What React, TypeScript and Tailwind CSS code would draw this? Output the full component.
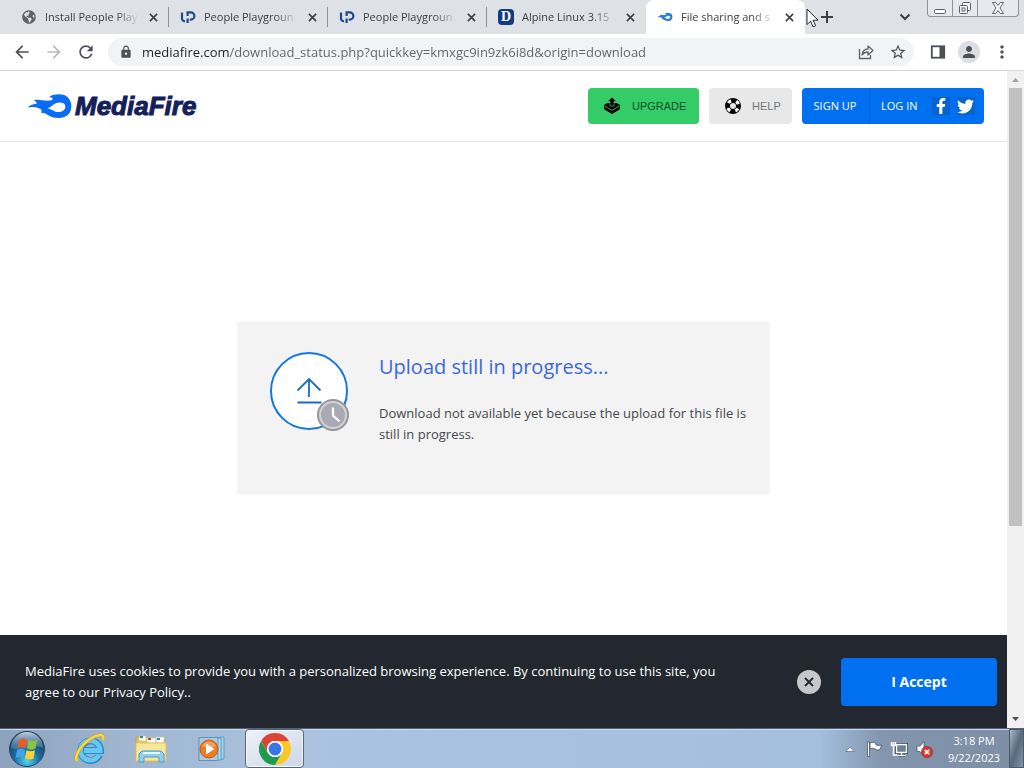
import type { ReactNode } from "react";
import { MdArrowBack, MdArrowForward, MdLock, MdMoreVert, MdPerson, MdRefresh, MdStarBorder } from "react-icons/md";
import { FaFacebookF, FaGlobeAmericas, FaTwitter } from "react-icons/fa";

function Cross({ className }: { className: string }) {
  return (
    <svg viewBox="0 0 10 10" className={className} fill="none" stroke="currentColor" strokeWidth="1.8">
      <path d="M1 1l8 8M9 1l-8 8" />
    </svg>
  );
}

function HookMark() {
  return (
    <svg viewBox="0 0 16 16" className="size-4" fill="none" stroke="#1d4a8f" strokeWidth="2.2">
      <path d="M2 3.500v6a2.600 2.600 0 0 0 3 2.600" />
      <path d="M7.600 14V9.500M7.600 7V3.400h3.200a3.600 3.600 0 0 1 0 7.200H9.800" />
    </svg>
  );
}

function TileMark() {
  return (
    <span className="flex size-4 items-center justify-center rounded bg-[#123a85] font-['Liberation_Serif',serif] text-sm leading-4 font-bold text-white">
      D
    </span>
  );
}

function Flame({ className }: { className: string }) {
  return (
    <svg viewBox="78 66 140 80" className={className} aria-hidden="true">
      <path
        fill="currentColor"
        fillRule="evenodd"
        d="M146 76C161 67 187 66 200 76C216 88 217 115 205 129C191 145 162 143 145 134C135 127 131 124 119 125C126 119 122 114 114 111C104 107 92 106 80 109C88 101 98 99 108 98C107 93 104 89 98 87C114 82 136 92 152 87C160 84 156 79 146 76ZM140 111C153 109 160 94 178 94C192 94 197 103 194 111C189 123 173 125 163 121C155 117 150 113 140 111Z"
      />
    </svg>
  );
}

type TabInfo = { title: string; icon: ReactNode; active?: boolean; line?: boolean };

const tabs: TabInfo[] = [
  { title: "Install People Play", icon: <FaGlobeAmericas className="size-3.5 text-[#5f6368]" />, line: true },
  { title: "People Playgroun", icon: <HookMark />, line: true },
  { title: "People Playgroun", icon: <HookMark />, line: true },
  { title: "Alpine Linux 3.15", icon: <TileMark /> },
  { title: "File sharing and s", icon: <Flame className="h-4 w-4 text-[#2f7fd0]" />, active: true },
];

function Tab({ title, icon, active, line }: TabInfo) {
  return (
    <div
      className={
        active
          ? "flex h-full max-w-[159px] min-w-0 flex-1 items-center rounded-t-lg bg-white pr-2 pl-[11px]"
          : "flex h-full max-w-[159px] min-w-0 flex-1 items-center pl-[11px]"
      }
    >
      <button className="flex min-w-0 flex-1 items-center gap-2 text-left text-[11px] text-[#3c4043]">
        <span className="flex size-4 shrink-0 items-center justify-center">{icon}</span>
        <span className="flex-1 overflow-hidden whitespace-nowrap [mask-image:linear-gradient(to_right,black_75%,transparent)]">
          {title}
        </span>
      </button>
      <button aria-label={`Close ${title}`} className="ml-1.5 flex size-4 items-center justify-center text-[#3c4043]">
        <Cross className="size-[9px]" />
      </button>
      {!active && <span className={line ? "ml-[7px] h-5 w-px bg-[#8d9196]" : "ml-[7px] h-5 w-px"} />}
    </div>
  );
}

function TabStrip() {
  return (
    <div className="flex h-[34px] shrink-0 items-center bg-[#dee1e6] pl-2.5">
      <div className="flex h-full min-w-0 flex-1 items-center">
        {tabs.map((tab, i) => (
          <Tab key={i} {...tab} />
        ))}
        <button aria-label="New tab" className="ml-3 flex size-5 items-center justify-center">
          <svg viewBox="0 0 14 14" className="size-3.5" stroke="#3c4043" strokeWidth="2">
            <path d="M7 1v12M1 7h12" />
          </svg>
        </button>
      </div>
      <button aria-label="Search tabs" className="mr-3 flex size-5 items-center justify-center">
        <svg viewBox="0 0 12 12" className="size-3" fill="none" stroke="#3c4043" strokeWidth="2">
          <path d="M1.500 3.500L6 8l4.500-4.500" />
        </svg>
      </button>
      <div className="mr-[5px] flex h-[17px] self-start rounded-b border border-t-0 border-[#8e939a] bg-[#e6e9ed]">
        <button aria-label="Minimize" className="flex w-[25px] items-center justify-center border-r border-[#8e939a]">
          <svg viewBox="0 0 14 14" className="size-3.5" fill="#fff" stroke="#5c6066">
            <rect x="1.500" y="8.500" width="11" height="4" rx="1" />
          </svg>
        </button>
        <button aria-label="Restore" className="flex w-[25px] items-center justify-center border-r border-[#8e939a]">
          <svg viewBox="0 0 14 14" className="size-3.5" fill="#fff" stroke="#5c6066">
            <rect x="4.500" y="1.500" width="8" height="8" rx="1" />
            <rect x="1.500" y="4.500" width="8" height="8" rx="1" />
            <rect x="4" y="7" width="3" height="3" />
          </svg>
        </button>
        <button aria-label="Close window" className="flex w-10 items-center justify-center">
          <svg viewBox="0 0 14 14" className="size-3.5" fill="#fff" stroke="#5c6066">
            <path d="M1.500 1.500h3.200L7 4.500l2.300-3h3.200L9 7l3.500 5.500H9.300L7 9.500l-2.300 3H1.500L5 7z" />
          </svg>
        </button>
      </div>
    </div>
  );
}

function AddressBar() {
  return (
    <div className="flex h-[37px] shrink-0 items-center border-b border-[#d5d7da] bg-white pr-3 pl-3 text-[#4d5156]">
      <button aria-label="Back" className="flex size-5 items-center justify-center">
        <MdArrowBack className="size-5" />
      </button>
      <button aria-label="Forward" className="ml-3 flex size-5 items-center justify-center text-[#b9bbbe]">
        <MdArrowForward className="size-5" />
      </button>
      <button aria-label="Reload" className="ml-3 flex size-5 items-center justify-center">
        <MdRefresh className="size-5" />
      </button>
      <div className="ml-3 flex h-7 min-w-0 flex-1 items-center rounded-full bg-[#f1f3f4] pr-[7px] pl-[11px]">
        <MdLock className="size-3.5 shrink-0" />
        <input
          aria-label="Address"
          defaultValue="mediafire.com/download_status.php?quickkey=kmxgc9in9zk6i8d&origin=download"
          className="ml-[9px] h-7 min-w-0 flex-1 bg-[linear-gradient(to_right,#202124_88px,#5f6368_88px)] bg-clip-text text-[13px] text-transparent outline-none"
        />
        <button aria-label="Share" className="mr-3.5 flex size-[18px] items-center justify-center">
          <svg viewBox="0 0 18 18" className="size-[18px]" fill="none" stroke="#5f6368" strokeWidth="1.300">
            <path d="M2.500 6v9.500h11V12" />
            <path d="M5 12c.5-4 3-6 6-6V3l5 4.500-5 4.500V9c-2.500 0-4.500.8-6 3z" strokeLinejoin="round" />
          </svg>
        </button>
        <button aria-label="Bookmark" className="flex size-[18px] items-center justify-center">
          <MdStarBorder className="size-[18px]" />
        </button>
      </div>
      <button aria-label="Side panel" className="ml-4 flex size-4 items-center justify-center">
        <svg viewBox="0 0 16 16" className="size-4">
          <rect x="1.800" y="2.300" width="12.400" height="11.400" fill="none" stroke="#4d5156" strokeWidth="1.800" />
          <path d="M9.500 2h5v12h-5z" fill="#4d5156" />
        </svg>
      </button>
      <button aria-label="Profile" className="ml-3 flex size-[22px] items-center justify-center rounded-full bg-[#dadde2]">
        <MdPerson className="size-[18px]" />
      </button>
      <button aria-label="Menu" className="ml-3 flex size-5 items-center justify-center">
        <MdMoreVert className="size-5" />
      </button>
    </div>
  );
}

function SiteHeader() {
  return (
    <header className="flex h-[71px] shrink-0 items-center justify-between border-b border-[#e4e5e8] pr-[23px] pl-[27px]">
      <a href="#" className="flex items-center gap-0.5 text-[#0a6cf5]">
        <Flame className="h-[27px] w-[46px]" />
        <span className="font-['Liberation_Sans',sans-serif] text-[26px] leading-7 font-bold text-[#14205a] italic [-webkit-text-stroke:1px_#14205a]">
          MediaFire
        </span>
      </a>
      <nav className="flex h-9 gap-2.5 text-xs">
        <a
          href="#"
          className="flex w-[111px] items-center gap-[11px] rounded-sm bg-[#33cc66] pl-[15px] font-['Liberation_Sans',sans-serif] text-[11px] text-[#12502a]"
        >
          <svg viewBox="0 0 18 18" className="size-[18px] shrink-0">
            <path fill="#000" d="M4.500 6L1 8v4.200l8 4.800 8-4.800V8l-3.500-2z" />
            <path d="M1.500 9L9 13.300 16.500 9" fill="none" stroke="#33cc66" strokeWidth=".8" />
            <path d="M9 0l4.500 4.500H11V9H7V4.500H4.500z" fill="#000" stroke="#33cc66" strokeWidth=".7" />
          </svg>
          UPGRADE
        </a>
        <a
          href="#"
          className="flex w-[83px] items-center gap-2.5 rounded-sm bg-[#e8e8e9] pl-[15px] font-['Liberation_Sans',sans-serif] text-[11px] text-[#72767c]"
        >
          <svg viewBox="0 0 18 18" className="size-[18px] shrink-0">
            <circle cx="9" cy="9" r="5.500" fill="none" stroke="#000" strokeWidth="5" />
            <circle
              cx="9"
              cy="9"
              r="5.600"
              fill="none"
              stroke="#fff"
              strokeWidth="3.200"
              strokeDasharray="3.400 5.396"
              strokeDashoffset="-2.700"
            />
          </svg>
          HELP
        </a>
        <div className="flex w-[182px] rounded-sm bg-[#0070f0] text-[11px] text-white">
          <a href="#" className="flex w-[68px] items-center justify-center border-r border-[#0b58c6] pr-px">
            SIGN UP
          </a>
          <a href="#" className="flex items-center pl-[11px]">
            LOG IN
          </a>
          <a href="#" aria-label="Facebook" className="ml-3.5 flex size-[18px] items-center justify-center self-center bg-[#0862cf]">
            <FaFacebookF className="size-4" />
          </a>
          <a href="#" aria-label="Twitter" className="ml-[7px] flex size-[18px] items-center justify-center self-center bg-[#0862cf]">
            <FaTwitter className="size-[17px]" />
          </a>
        </div>
      </nav>
    </header>
  );
}

function StatusCard() {
  return (
    <section className="flex min-h-[172px] w-full max-w-[531px] gap-[30px] bg-[#f3f3f3] py-[29px] pr-4 pl-[31px] shadow-[0_0_3px_#f0f0f0]">
      <svg viewBox="0 0 80 80" className="size-20 shrink-0" fill="none">
        <circle cx="40" cy="40" r="38" fill="#fff" stroke="#1676e0" strokeWidth="2" />
        <path d="M40 46V28M28.500 39.500L40 28l11.500 11.500M28.500 51.500h24" stroke="#1a6cc0" strokeWidth="1.800" />
        <circle cx="64" cy="64" r="15" fill="#d3d3d5" stroke="#96979b" strokeWidth="2" />
        <circle cx="64" cy="64" r="12" fill="#a9aab5" />
        <path d="M64 56.500v8l6.500 6" stroke="#fff" strokeWidth="2.200" />
      </svg>
      <div>
        <h1 className="text-xl leading-8 text-[#3b68dc]">Upload still in progress...</h1>
        <p className="mt-5 text-[13px] leading-[21px] text-[#45484d]">
          Download not available yet because the upload for this file is still in progress.
        </p>
      </div>
    </section>
  );
}

function CookieBanner() {
  return (
    <aside className="flex shrink-0 items-center bg-[#222730] pt-[23px] pr-2.5 pb-[22px] pl-[25px] text-white">
      <p className="max-w-[700px] flex-1 text-[13px] leading-[21px]">
        MediaFire uses cookies to provide you with a personalized browsing experience. By continuing to use this site,
        you agree to our Privacy Policy..
      </p>
      <button
        aria-label="Dismiss"
        className="ml-auto flex size-6 shrink-0 items-center justify-center rounded-full bg-[#c6c7ca] text-[#22262e]"
      >
        <Cross className="size-2.5" />
      </button>
      <button className="ml-5 h-12 w-[156px] shrink-0 rounded-sm bg-[#0070f0] text-sm font-bold">I Accept</button>
    </aside>
  );
}

function Scrollbar() {
  return (
    <div className="flex w-[17px] shrink-0 flex-col items-center bg-[#f1f1f1]" aria-hidden="true">
      <svg viewBox="0 0 17 17" className="size-[17px] shrink-0">
        <path d="M5 11l3.500-4 3.500 4z" fill="#a3a3a3" />
      </svg>
      <div className="h-2/3 w-[13px] bg-[#c1c1c1]" />
      <svg viewBox="0 0 17 17" className="mt-auto size-[17px] shrink-0">
        <path d="M5 6l3.500 4L12 6z" fill="#505050" />
      </svg>
    </div>
  );
}

function StartOrb() {
  return (
    <svg viewBox="0 0 38 38" className="size-[38px]">
      <defs>
        <radialGradient id="orb" cx=".5" cy=".85" r=".8">
          <stop offset="0" stopColor="#4fd5f2" />
          <stop offset=".45" stopColor="#1c6c9f" />
          <stop offset="1" stopColor="#173b60" />
        </radialGradient>
        <linearGradient id="gloss" x2="0" y2="1">
          <stop offset="0" stopColor="#dbe9f3" stopOpacity=".85" />
          <stop offset="1" stopColor="#7fa6c3" stopOpacity=".25" />
        </linearGradient>
      </defs>
      <circle cx="19" cy="19" r="17.500" fill="url(#orb)" stroke="#27445f" />
      <path d="M3 18A16 16 0 0 1 35 18C25 13 13 23 3 18z" fill="url(#gloss)" />
      <path d="M11 10c3-2 5-2 8-.5L17.500 18c-3-1.500-5-1.200-8 .5z" fill="#ed5b25" />
      <path d="M20.500 10c3 1.500 5.500 1.500 8.500 0L27.500 18.500c-3 1.500-5.500 1.500-8.500 0z" fill="#8bc63e" />
      <path d="M9 20c3-1.700 5-1.700 8-.3L15.500 28c-3-1.300-5-1.200-8 .3z" fill="#3fa4e4" />
      <path d="M18.500 20.300c3 1.400 5.500 1.400 8.500 0L25.500 28.500c-3 1.400-5.500 1.400-8.500 0z" fill="#fbd22f" />
    </svg>
  );
}

function ExplorerE() {
  return (
    <svg viewBox="0 0 32 32" className="size-8" fill="none">
      <path d="M25.500 22A9.800 9.800 0 1 1 26.500 17.500H10" stroke="#2b8ccb" strokeWidth="7" />
      <path d="M25 21.700A9.800 9.800 0 1 1 26 17.500H10" stroke="#65c8f0" strokeWidth="4.800" />
      <path d="M3 28C-1 22 12 4 26 2c3-.3 4 2 3 5" stroke="#c99d17" strokeWidth="3.400" />
      <path d="M3 28C-1 22 12 4 26 2c3-.3 4 2 3 5" stroke="#f8d84a" strokeWidth="2.400" />
    </svg>
  );
}

function FolderIcon() {
  return (
    <svg viewBox="0 0 34 30" className="h-[30px] w-[34px]">
      <path d="M2 3h11l2 3h16v21H2z" fill="#e4c05f" stroke="#c79f45" />
      <path d="M5 2h7v5H5zM13 4h9v5h-9zM22 3h8v6h-8z" fill="#fff" stroke="#d2c28b" strokeWidth=".7" />
      <path d="M6 2h3v2H6z" fill="#2d9a43" />
      <path d="M14 4h3v2h-3z" fill="#d63c2c" />
      <path d="M23 4h3v2h-3z" fill="#2e83c4" />
      <path d="M2 9h30v18H2z" fill="#f8e69a" stroke="#dfc269" />
      <path d="M5 28v-8l3-3h19l3 3v8h-5v-5H10v5z" fill="#8fd0ee" stroke="#4a9dcb" />
      <path d="M9 19h17" stroke="#e4f7ff" strokeWidth="2" />
    </svg>
  );
}

function PlayerIcon() {
  return (
    <svg viewBox="0 0 30 28" className="h-7 w-[30px]">
      <path d="M9 3l18-1v22L9 25z" fill="#a7d3ea" stroke="#5c9fc9" />
      <path d="M6 3l18 0v22H6z" fill="#b9dff0" stroke="#4c9ac8" />
      <path d="M2 2.500h19v23H2z" fill="#a9cbe2" stroke="#5f93bb" />
      <circle cx="12" cy="14" r="9" fill="#ef7b23" stroke="#c65b17" />
      <path d="M5 11a8 8 0 0 1 14 0c-4 2-9 2-14 0z" fill="#f8b06d" opacity=".7" />
      <path d="M9 8.500l8.500 5.500L9 19.500z" fill="#fff" />
    </svg>
  );
}

function ChromeIcon() {
  return (
    <svg viewBox="0 0 32 32" className="size-8">
      <circle cx="16" cy="16" r="16" fill="#fff" />
      <path d="M2.140 8A16 16 0 0 1 29.860 8H16a8 8 0 0 0-6.930 12z" fill="#dd4436" />
      <path d="M29.860 8A16 16 0 0 1 16 32l6.930-12A8 8 0 0 0 16 8z" fill="#fbc828" />
      <path d="M16 32A16 16 0 0 1 2.140 8l6.930 12A8 8 0 0 0 22.930 20z" fill="#219a50" />
      <circle cx="16" cy="16" r="8" fill="#fff" />
      <circle cx="16" cy="16" r="6.400" fill="#3876e4" />
    </svg>
  );
}

function Taskbar() {
  return (
    <footer className="flex h-10 shrink-0 items-center border-t border-[#52627a] bg-[linear-gradient(to_right,#8da2bd_0%,#9fb5d0_12%,#abc3e0_28%,#a8c0dd_60%,#a5bfdf_80%,#8396ae_86%,#7d8da3_100%)] shadow-[inset_0_1px_0_#c9d9ea]">
      <button aria-label="Start" className="ml-2 flex size-[38px] items-center justify-center">
        <StartOrb />
      </button>
      <button aria-label="Internet Explorer" className="ml-7 flex size-8 items-center justify-center">
        <ExplorerE />
      </button>
      <button aria-label="File Explorer" className="ml-7 flex h-8 w-[34px] items-center justify-center">
        <FolderIcon />
      </button>
      <button aria-label="Media Player" className="ml-[29px] flex h-8 w-[30px] items-center justify-center">
        <PlayerIcon />
      </button>
      <button
        aria-label="Google Chrome"
        className="ml-[18px] flex h-[39px] w-[59px] items-center justify-center rounded-sm border border-[#54657b] bg-[linear-gradient(to_bottom_right,#eef2f8,#ccd7e7)] shadow-[inset_0_0_0_1px_#f6f9fc]"
      >
        <ChromeIcon />
      </button>
      <div className="ml-auto flex h-full items-center text-white">
        <button aria-label="Show hidden icons" className="flex size-4 items-center justify-center">
          <svg viewBox="0 0 10 6" className="h-1.5 w-2.5">
            <path d="M1 5.500L5 1l4 4.500z" fill="#fff" stroke="#4e5d70" strokeWidth=".6" />
          </svg>
        </button>
        <button aria-label="Action Center" className="ml-[7px] flex size-[18px] items-center justify-center">
          <svg viewBox="0 0 18 18" className="size-[18px]" fill="#fff" stroke="#354457" strokeWidth=".7">
            <path d="M2.500 2h2v14.500h-2z" />
            <path d="M5 3c2-1 4-1 6 .5v1.500c2 .8 3.500.5 5.500 0L15 9.500c-2 .8-4 .6-5-.5-2-1-3.500-.8-5 0z" />
          </svg>
        </button>
        <button aria-label="Network" className="ml-[7px] flex size-[18px] items-center justify-center">
          <svg viewBox="0 0 18 18" className="size-[18px]" fill="none">
            <path d="M6.500 4.500h10v8h-10zM8 15.500h7M11.500 13v2" stroke="#2f3d50" strokeWidth="3" />
            <path d="M6.500 4.500h10v8h-10z" fill="#6d7f95" stroke="#fff" strokeWidth="1.400" />
            <path d="M7.500 15.500h8M11.500 13v2" stroke="#fff" strokeWidth="1.400" />
            <path d="M1.500 2v3.500h4V2M3.500 2v4v9H7" stroke="#fff" strokeWidth="1.400" />
          </svg>
        </button>
        <button aria-label="Volume muted" className="ml-[7px] flex size-[18px] items-center justify-center">
          <svg viewBox="0 0 18 18" className="size-[18px]">
            <path d="M2 6h3l4-4.500v14L5 11.500H2z" fill="#fff" stroke="#3d4b5e" strokeWidth=".7" />
            <circle cx="12" cy="12" r="5.500" fill="#d9372f" stroke="#8c1d19" strokeWidth=".6" />
            <path d="M9.800 9.800l4.400 4.400M14.200 9.800l-4.400 4.400" stroke="#fff" strokeWidth="1.700" />
          </svg>
        </button>
        <div className="ml-2 w-[66px] text-center text-[11px] leading-[17px]">
          <div>3:18 PM</div>
          <div>9/22/2023</div>
        </div>
        <button
          aria-label="Show desktop"
          className="ml-0.5 h-full w-[15px] border border-[#4b5a6d] bg-[linear-gradient(to_bottom_right,#a9b7c8,#59687c_50%,#8494a8)]"
        />
      </div>
    </footer>
  );
}

function Pointer() {
  return (
    <svg viewBox="0 0 13 20" className="pointer-events-none absolute top-2 left-[806px] h-5 w-[13px]">
      <path d="M1 1v15.500l3.600-3.300 2.400 5.600 2.600-1.100-2.400-5.500H12z" fill="#fff" stroke="#23272e" />
    </svg>
  );
}

export default function App() {
  return (
    <div className="relative flex h-screen flex-col overflow-hidden bg-white font-['Open_Sans','Noto_Sans',sans-serif]">
      <TabStrip />
      <AddressBar />
      <div className="flex min-h-0 flex-1">
        <div className="flex min-w-0 flex-1 flex-col">
          <SiteHeader />
          <main className="flex min-h-0 flex-1 items-start justify-center overflow-hidden pt-[180px]">
            <StatusCard />
          </main>
          <CookieBanner />
        </div>
        <Scrollbar />
      </div>
      <Taskbar />
      <Pointer />
    </div>
  );
}
